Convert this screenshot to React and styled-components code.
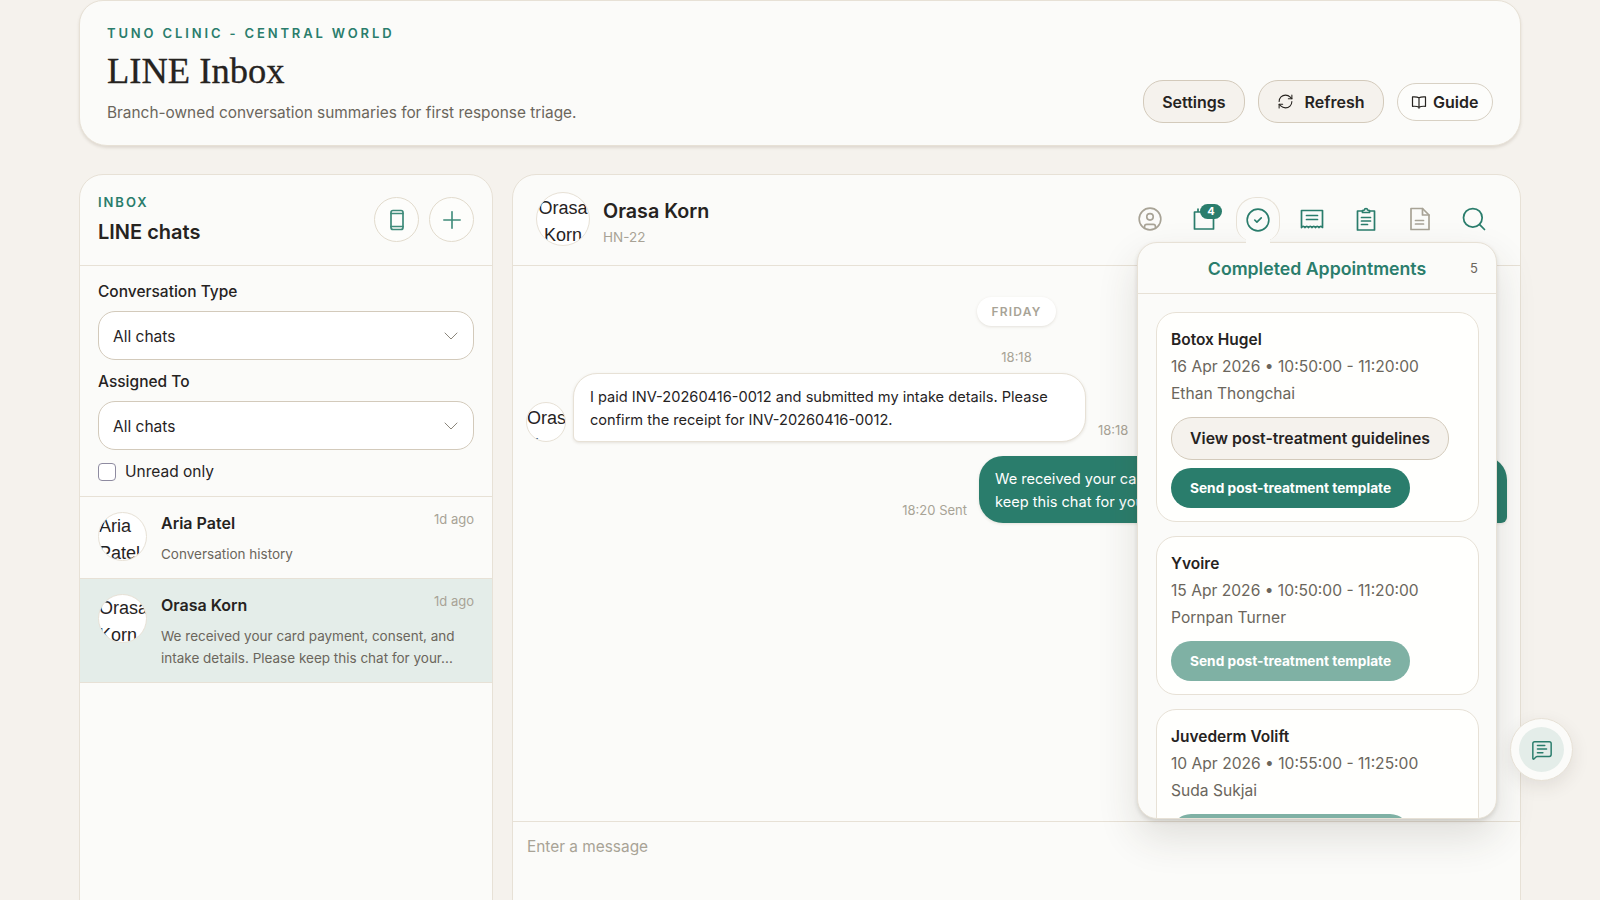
import React from 'react';
import styled, { createGlobalStyle } from 'styled-components';
import { ChevronDown, CircleCheck, CircleUser, MessageSquareText, Plus, RefreshCw, Search } from 'lucide-react';

const GlobalStyle = createGlobalStyle`
  html, body {
    margin: 0;
    height: 900px;
    overflow: hidden;
    background: #f5f2ed;
    color: #26231f;
    font-family: Inter, "Liberation Sans", sans-serif;
  }
  * { box-sizing: border-box; }
`;

const Page = styled.div`
  position: relative;
  height: 900px;
  padding: 0 79px;
  display: flex;
  flex-direction: column;
  gap: 28px;
`;

const HeaderCard = styled.header`
  flex: none;
  height: 146px;
  padding: 24px 27px 0;
  display: flex;
  justify-content: space-between;
  background: #fbfbf9;
  border: 1px solid #e7e1d6;
  border-radius: 24px 24px 28px 28px;
  box-shadow: 0 2px 3px rgba(110, 95, 70, 0.16);
`;

const Eyebrow = styled.div`
  font-size: 13px;
  line-height: 16px;
  font-weight: 600;
  letter-spacing: ${(p) => p.$spacing || '0.22em'};
  color: #2a7d6c;
  text-transform: uppercase;
`;

const PageTitle = styled.h1`
  margin: 7px 0 0;
  font-family: "Liberation Serif", Georgia, serif;
  font-size: 36.5px;
  line-height: 46px;
  font-weight: 400;
  -webkit-text-stroke: 0.3px #26231f;
  color: #26231f;
`;

const Subtitle = styled.p`
  margin: 8px 0 0;
  font-size: 15.4px;
  line-height: 22px;
  color: #6b665c;
`;

const HeaderActions = styled.div`
  display: flex;
  align-items: center;
  gap: 13px;
  margin: 55px 0 0;
  align-self: flex-start;
`;

const PillButton = styled.button`
  height: ${(p) => (p.$ghost ? 38 : 43)}px;
  padding: 0 ${(p) => (p.$ghost ? 13.5 : 18)}px;
  display: inline-flex;
  align-items: center;
  gap: ${(p) => (p.$ghost ? 6 : 11)}px;
  border: 1px solid ${(p) => (p.$ghost ? '#d8d1c4' : '#d3cabb')};
  border-radius: 20px;
  background: ${(p) => (p.$ghost ? '#fdfdfb' : '#f5f2ed')};
  color: #26231f;
  font: 600 16px Inter, sans-serif;
  white-space: nowrap;
`;

const Columns = styled.div`
  flex: none;
  height: 780px;
  display: grid;
  grid-template-columns: 414px 1fr;
  gap: 19px;
`;

const Panel = styled.section`
  position: relative;
  min-width: 0;
  display: flex;
  flex-direction: column;
  background: #fbfbf9;
  border: 1px solid #e7e1d6;
  border-radius: 24px;
`;

const SideHead = styled.div`
  flex: none;
  height: 91px;
  padding: 19px 18px 0 18px;
  display: flex;
  justify-content: space-between;
  align-items: flex-start;
  border-bottom: 1px solid #e7e1d6;
`;

const SideTitle = styled.h2`
  margin: 10px 0 0;
  font-size: 20px;
  line-height: 24px;
  font-weight: 600;
`;

const RoundButtons = styled.div`
  display: flex;
  gap: 10px;
  margin-top: 3px;
`;

const RoundButton = styled.button`
  width: 45px;
  height: 45px;
  padding: 0;
  display: grid;
  place-items: center;
  background: #fdfdfb;
  border: 1px solid #e2dbcd;
  border-radius: 50%;
  color: #3f8b7a;
`;

const Filters = styled.div`
  flex: none;
  height: 231px;
  padding: 16px 18px 0 18px;
  border-bottom: 1px solid #e7e1d6;
`;

const FieldLabel = styled.div`
  font-size: 15.5px;
  line-height: 20px;
  font-weight: 500;
  margin-bottom: 9px;
`;

const SelectBox = styled.div`
  height: 49px;
  padding: 2px 10px 0 14px;
  margin-bottom: 12px;
  display: flex;
  align-items: center;
  justify-content: space-between;
  background: #fff;
  border: 1px solid #d3cabb;
  border-radius: 17px;
  font-size: 15.5px;
  color: #26231f;
  svg { color: #8b867b; margin-top: -2px; }
`;

const CheckRow = styled.label`
  display: flex;
  align-items: center;
  gap: 9px;
  font-size: 15.5px;
  line-height: 20px;
`;

const CheckBox = styled.span`
  width: 18px;
  height: 18px;
  background: #fff;
  border: 1px solid #8e8ba0;
  border-radius: 4px;
`;

const ChatRow = styled.div`
  flex: none;
  height: ${(p) => p.$height}px;
  padding: 15px 18px 0 18px;
  display: flex;
  gap: 14px;
  background: ${(p) => (p.$active ? '#e4edE9' : 'transparent')};
  border-bottom: 1px solid #e7e1d6;
`;

const Avatar = styled.div`
  flex: none;
  width: ${(p) => p.$size}px;
  height: ${(p) => p.$size}px;
  padding-top: ${(p) => p.$pad || 0}px;
  overflow: hidden;
  background: #fff;
  border: 1px solid #e7e1d6;
  border-radius: 50%;
  font-family: "Liberation Sans", Arial, sans-serif;
  font-size: 18px;
  line-height: 26.5px;
  color: #26231f;
  text-align: ${(p) => (p.$center ? 'center' : 'left')};
`;

const ChatBody = styled.div`
  flex: 1;
  min-width: 0;
`;

const ChatTop = styled.div`
  display: flex;
  justify-content: space-between;
`;

const ChatName = styled.div`
  font-size: 16px;
  line-height: 22px;
  font-weight: 600;
`;

const ChatAge = styled.div`
  margin-top: -1px;
  font-size: 13px;
  line-height: 16px;
  color: #a8a396;
`;

const ChatPreview = styled.div`
  margin-top: 9px;
  font-size: 13.5px;
  line-height: 22px;
  color: #6b665c;
`;

const MainHead = styled.div`
  flex: none;
  height: 91px;
  padding: 17px 24px 0 23px;
  display: flex;
  align-items: flex-start;
  border-bottom: 1px solid #e7e1d6;
`;

const Person = styled.div`
  margin-left: 13px;
  padding-top: 6px;
`;

const PersonName = styled.div`
  font-size: 19.7px;
  line-height: 26px;
  font-weight: 600;
`;

const PersonCode = styled.div`
  margin-top: 3px;
  font-size: 13.5px;
  line-height: 20px;
  color: #a8a396;
`;

const Toolbar = styled.div`
  margin-left: auto;
  margin-top: 5px;
  display: flex;
  gap: 10px;
`;

const ToolButton = styled.div`
  position: relative;
  width: 44px;
  height: 44px;
  display: grid;
  place-items: center;
  color: ${(p) => (p.$muted ? '#a8a396' : '#2a7d6c')};
  ${(p) => p.$active && `
    z-index: 3;
    background: #fbfbf9;
    border: 1px solid #e7e1d6;
    border-bottom: none;
    border-radius: 20px 20px 16px 16px;
    &::after {
      content: '';
      position: absolute;
      left: 9px;
      right: 9px;
      top: 36px;
      height: 11px;
      background: #fbfbf9;
    }
  `}
`;

const Badge = styled.span`
  position: absolute;
  top: 7px;
  right: 4px;
  width: 22px;
  height: 15px;
  display: grid;
  place-items: center;
  background: #2a7d6c;
  border-radius: 8px;
  color: #fff;
  font-size: 11px;
  line-height: 15px;
  font-weight: 700;
`;

const Messages = styled.div`
  flex: 1;
  min-height: 0;
  padding: 31px 13px 0 13px;
  display: flex;
  flex-direction: column;
  overflow: hidden;
`;

const DayPill = styled.div`
  align-self: center;
  height: 29px;
  padding: 0 15px;
  display: flex;
  align-items: center;
  background: #fff;
  border-radius: 15px;
  box-shadow: 0 1px 3px rgba(110, 95, 70, 0.16);
  color: #a8a396;
  font-size: 12px;
  font-weight: 600;
  letter-spacing: 0.1em;
`;

const TimeMark = styled.div`
  align-self: center;
  margin: 23px 0 8px;
  font-size: 13px;
  line-height: 16px;
  color: #a8a396;
`;

const MessageRow = styled.div`
  display: flex;
  align-items: flex-end;
  gap: ${(p) => (p.$out ? 0 : 7)}px;
  justify-content: ${(p) => (p.$out ? 'flex-end' : 'flex-start')};
  margin-bottom: 14px;
`;

const Bubble = styled.div`
  flex: none;
  width: ${(p) => (p.$out ? 528 : 513)}px;
  padding: 12px 16px 10px;
  font-size: 14.6px;
  line-height: 22.5px;
  border-radius: ${(p) => (p.$out ? '24px 24px 6px 24px' : '24px 24px 24px 6px')};
  background: ${(p) => (p.$out ? '#2a7d6c' : '#fff')};
  color: ${(p) => (p.$out ? '#fff' : '#26231f')};
  border: ${(p) => (p.$out ? 'none' : '1px solid #e7e1d6')};
  box-shadow: 0 1px 3px rgba(110, 95, 70, 0.16);
`;

const MessageMeta = styled.div`
  flex: none;
  font-size: 13px;
  line-height: 16px;
  color: #a8a396;
  margin: ${(p) => (p.$out ? '0 12px 5px 0' : '0 0 4px 5px')};
`;

const Composer = styled.div`
  flex: none;
  height: 132px;
  padding: 15px 14px;
  border-top: 1px solid #e7e1d6;
  font-size: 15.4px;
  line-height: 20px;
  color: #a8a396;
`;

const Popover = styled.div`
  position: absolute;
  top: 67px;
  right: 23px;
  width: 360px;
  height: 577px;
  z-index: 2;
  display: flex;
  flex-direction: column;
  overflow: hidden;
  background: #fbfbf9;
  border: 1px solid #e7e1d6;
  border-radius: 20px;
  box-shadow: 0 18px 40px rgba(60, 50, 35, 0.14), 0 2px 4px rgba(60, 50, 35, 0.14);
`;

const PopHead = styled.div`
  flex: none;
  height: 51px;
  padding: 0 18px;
  display: grid;
  grid-template-columns: 1fr auto 1fr;
  align-items: center;
  border-bottom: 1px solid #e7e1d6;
`;

const PopTitle = styled.div`
  grid-column: 2;
  font-size: 17.7px;
  font-weight: 600;
  color: #2a7d6c;
`;

const PopCount = styled.div`
  justify-self: end;
  font-size: 13px;
  color: #6b665c;
`;

const PopList = styled.div`
  flex: 1;
  min-height: 0;
  overflow: hidden;
  padding: 18px 17px 0 18px;
  display: flex;
  flex-direction: column;
  gap: 14px;
`;

const ApptCard = styled.div`
  flex: none;
  padding: 15px 14px 13px;
  background: #fffffd;
  border: 1px solid #e7e1d6;
  border-radius: 20px;
`;

const ApptName = styled.div`
  font-size: 15.5px;
  line-height: 24px;
  font-weight: 600;
`;

const ApptLine = styled.div`
  margin-top: 3px;
  font-size: 15.6px;
  line-height: 24px;
  color: #6b665c;
`;

const ApptActions = styled.div`
  margin-top: 11px;
  display: flex;
  flex-direction: column;
  align-items: flex-start;
  gap: 8px;
`;

const GuideButton = styled.button`
  height: 43px;
  padding: 0 18px;
  background: #f5f2ed;
  border: 1px solid #d3cabb;
  border-radius: 21px;
  color: #26231f;
  font: 600 15.8px Inter, sans-serif;
`;

const SendButton = styled.button`
  height: 40px;
  padding: 0 19px;
  background: ${(p) => (p.$dim ? '#7fb1a4' : '#2a7d6c')};
  border: none;
  border-radius: 20px;
  color: #fff;
  font: 700 13.7px Inter, sans-serif;
`;

const HelpFab = styled.div`
  position: absolute;
  left: 1510px;
  top: 718px;
  width: 63px;
  height: 63px;
  display: grid;
  place-items: center;
  z-index: 4;
  background: #fbfbf9;
  border: 1px solid #e7e1d6;
  border-radius: 50%;
  box-shadow: 0 6px 18px rgba(60, 50, 35, 0.1);
`;

const HelpInner = styled.div`
  width: 45px;
  height: 45px;
  display: grid;
  place-items: center;
  background: #e4edE9;
  border-radius: 50%;
  color: #2a7d6c;
`;

const Glyph = ({ children, size = 24, box = 24, width = 1.7 }) => (
  <svg width={size} height={size} viewBox={`0 0 ${box} ${box}`} fill="none" stroke="currentColor" strokeWidth={width} strokeLinejoin="round" strokeLinecap="round">
    {children}
  </svg>
);

const PhoneIcon = () => (
  <Glyph>
    <rect x="6" y="2.500" width="12" height="19" rx="2" />
    <path d="M6 5.500h12M6 18.500h12" />
  </Glyph>
);

const GuideIcon = () => (
  <Glyph size={16} box={16} width={1.2}>
    <path d="M8 3.800C6.500 2.900 4 2.700 1.500 2.900v9.400c2.500-.2 5 0 6.500 1 1.500-1 4-1.200 6.500-1V2.900C12 2.700 9.500 2.900 8 3.800zM8 3.800v10.400" />
  </Glyph>
);

const CalendarIcon = () => (
  <Glyph>
    <path d="M2.500 5h19v17h-19zM6 2v3" />
  </Glyph>
);

const ReceiptIcon = () => (
  <Glyph>
    <path d="M1.500 3.500h21v17q-1.750-2.400-3.500 0q-1.750-2.400-3.500 0q-1.750-2.400-3.500 0q-1.750-2.400-3.500 0q-1.750-2.400-3.500 0q-1.750-2.400-3.500 0z" />
    <path d="M6.500 8.500h11M6.500 12.500h11" />
  </Glyph>
);

const ClipboardIcon = () => (
  <Glyph>
    <path d="M8.500 4H3.500v19h17V4h-5" />
    <path d="M8.500 5.500h7V3.500l-2-.5a1.500 1.500 0 0 0-3 0l-2 .5z" />
    <path d="M7.500 10.500h9M7.500 14h9M7.500 17.500h6" />
  </Glyph>
);

const FileIcon = () => (
  <Glyph>
    <path d="M3 1.500h11.500l6.500 6.500v14.500H3z" />
    <path d="M14.500 1.500V8H21" />
    <path d="M7.500 13.500h8M7.500 17h8" />
  </Glyph>
);

const appointments = [
  { name: 'Botox Hugel', time: '16 Apr 2026 • 10:50:00 - 11:20:00', staff: 'Ethan Thongchai', guide: true },
  { name: 'Yvoire', time: '15 Apr 2026 • 10:50:00 - 11:20:00', staff: 'Pornpan Turner', dim: true },
  { name: 'Juvederm Volift', time: '10 Apr 2026 • 10:55:00 - 11:25:00', staff: 'Suda Sukjai', dim: true },
];

export default function App() {
  return (
    <Page>
      <GlobalStyle />
      <HeaderCard>
        <div>
          <Eyebrow>TUNO CLINIC - CENTRAL WORLD</Eyebrow>
          <PageTitle>LINE Inbox</PageTitle>
          <Subtitle>Branch-owned conversation summaries for first response triage.</Subtitle>
        </div>
        <HeaderActions>
          <PillButton>Settings</PillButton>
          <PillButton><RefreshCw size={17} strokeWidth={1.5} /> Refresh</PillButton>
          <PillButton $ghost><GuideIcon /> Guide</PillButton>
        </HeaderActions>
      </HeaderCard>

      <Columns>
        <Panel>
          <SideHead>
            <div>
              <Eyebrow $spacing="0.15em">Inbox</Eyebrow>
              <SideTitle>LINE chats</SideTitle>
            </div>
            <RoundButtons>
              <RoundButton><PhoneIcon /></RoundButton>
              <RoundButton><Plus size={28} strokeWidth={1.4} /></RoundButton>
            </RoundButtons>
          </SideHead>
          <Filters>
            <FieldLabel>Conversation Type</FieldLabel>
            <SelectBox>All chats <ChevronDown size={24} strokeWidth={1} /></SelectBox>
            <FieldLabel>Assigned To</FieldLabel>
            <SelectBox>All chats <ChevronDown size={24} strokeWidth={1} /></SelectBox>
            <CheckRow><CheckBox /> Unread only</CheckRow>
          </Filters>
          <ChatRow $height={82}>
            <Avatar $size={49}>Aria Patel</Avatar>
            <ChatBody>
              <ChatTop><ChatName>Aria Patel</ChatName><ChatAge>1d ago</ChatAge></ChatTop>
              <ChatPreview>Conversation history</ChatPreview>
            </ChatBody>
          </ChatRow>
          <ChatRow $height={104} $active>
            <Avatar $size={49}>Orasa Korn</Avatar>
            <ChatBody>
              <ChatTop><ChatName>Orasa Korn</ChatName><ChatAge>1d ago</ChatAge></ChatTop>
              <ChatPreview>We received your card payment, consent, and intake details. Please keep this chat for your...</ChatPreview>
            </ChatBody>
          </ChatRow>
        </Panel>

        <Panel>
          <MainHead>
            <Avatar $size={54} $center $pad={2}>Orasa Korn</Avatar>
            <Person>
              <PersonName>Orasa Korn</PersonName>
              <PersonCode>HN-22</PersonCode>
            </Person>
            <Toolbar>
              <ToolButton $muted><CircleUser size={26} strokeWidth={1.5} /></ToolButton>
              <ToolButton><CalendarIcon /><Badge>4</Badge></ToolButton>
              <ToolButton $active><CircleCheck size={26} strokeWidth={1.5} /></ToolButton>
              <ToolButton><ReceiptIcon /></ToolButton>
              <ToolButton><ClipboardIcon /></ToolButton>
              <ToolButton $muted><FileIcon /></ToolButton>
              <ToolButton><Search size={28} strokeWidth={1.5} /></ToolButton>
            </Toolbar>
          </MainHead>

          <Messages>
            <DayPill>FRIDAY</DayPill>
            <TimeMark>18:18</TimeMark>
            <MessageRow>
              <Avatar $size={40} $pad={2}>Orasa Korn</Avatar>
              <Bubble>I paid INV-20260416-0012 and submitted my intake details. Please confirm the receipt for INV-20260416-0012.</Bubble>
              <MessageMeta>18:18</MessageMeta>
            </MessageRow>
            <MessageRow $out>
              <MessageMeta $out>18:20 Sent</MessageMeta>
              <Bubble $out>We received your card payment, consent, and intake details. Please keep this chat for your records.</Bubble>
            </MessageRow>
          </Messages>

          <Composer>Enter a message</Composer>

          <Popover>
            <PopHead>
              <PopTitle>Completed Appointments</PopTitle>
              <PopCount>5</PopCount>
            </PopHead>
            <PopList>
              {appointments.map((a) => (
                <ApptCard key={a.name}>
                  <ApptName>{a.name}</ApptName>
                  <ApptLine>{a.time}</ApptLine>
                  <ApptLine>{a.staff}</ApptLine>
                  <ApptActions>
                    {a.guide && <GuideButton>View post-treatment guidelines</GuideButton>}
                    <SendButton $dim={a.dim}>Send post-treatment template</SendButton>
                  </ApptActions>
                </ApptCard>
              ))}
            </PopList>
          </Popover>
        </Panel>
      </Columns>

      <HelpFab><HelpInner><MessageSquareText size={22} strokeWidth={1.6} /></HelpInner></HelpFab>
    </Page>
  );
}
